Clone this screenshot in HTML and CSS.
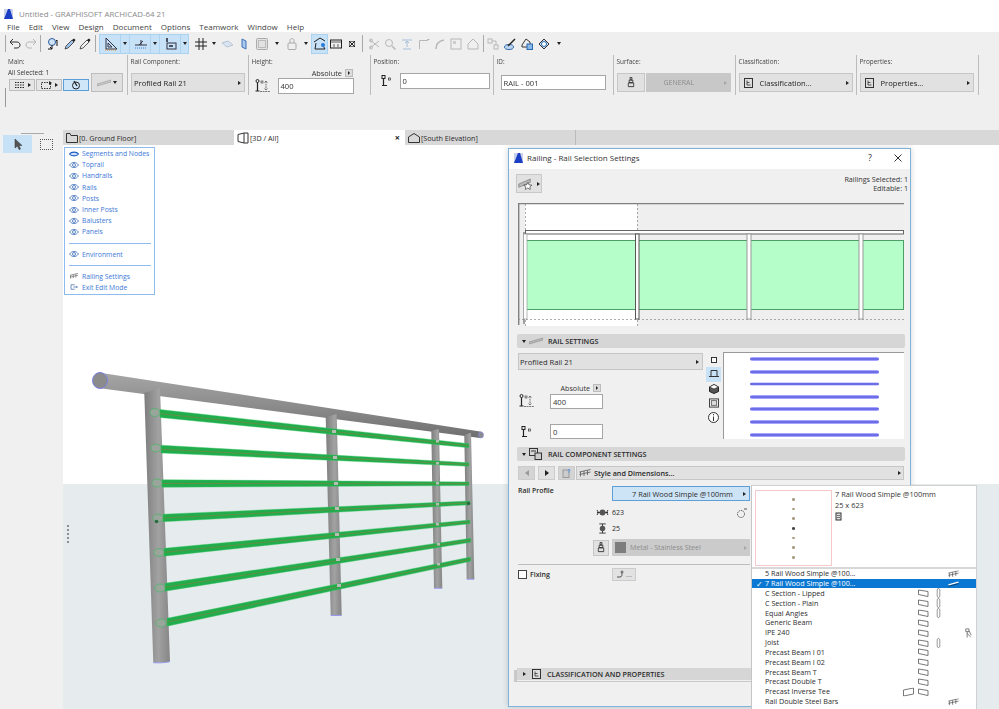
FILE: index.html
```html
<!DOCTYPE html>
<html lang="en">
<head>
<meta charset="utf-8">
<title>Untitled - GRAPHISOFT ARCHICAD-64 21</title>
<link rel="stylesheet" href="styles.css">
</head>
<body>
<svg class="sprite" aria-hidden="true">
  <defs>
    <symbol id="eye" viewBox="0 0 10 6"><path d="M.5 3C2 1 3.500.5 5 .5S8 1 9.500 3C8 5 6.500 5.500 5 5.500S2 5 .5 3Z" fill="none" stroke="#5f88c8"/><circle cx="5" cy="3" r="1.500" fill="none" stroke="#5f88c8"/></symbol>
    <symbol id="beam" viewBox="0 0 11 8"><path d="M.5 1 10 2.500V7.500L.5 5.500Z" fill="#fff" stroke="#555" stroke-width=".8"/></symbol>
    <symbol id="post" viewBox="0 0 5 11"><path d="M1 1.500 2.500.5 4 1.500V9.500L2.500 10.500 1 9.500Z" fill="#fff" stroke="#666" stroke-width=".8"/></symbol>
    <symbol id="rail" viewBox="0 0 12 8"><path d="M.5 3 11.500.5M.5 5.500 11.500 3M1.500 3V7.500M5 2.200V7M8.500 1.500V6" fill="none" stroke="#555" stroke-width=".8"/></symbol>
    <symbol id="railw" viewBox="0 0 12 8"><path d="M.5 5 11.500 2" fill="none" stroke="#fff" stroke-width="1.500"/><path d="M.5 6.500 11.500 3.500" fill="none" stroke="#123" stroke-width=".7"/></symbol>
    <symbol id="person" viewBox="0 0 8 11"><path d="M1 1H4.500V4H1ZM2.500 4V10.500M2.500 6 6.500 10M4.500 3 7 8" fill="none" stroke="#555" stroke-width=".8"/></symbol>
    <symbol id="wall" viewBox="0 0 11 9"><path d="M.5 2.500 10.500.5V6.500L.5 8.500Z" fill="#fff" stroke="#555" stroke-width=".8"/></symbol>
    <symbol id="doc" viewBox="0 0 9 10"><rect x=".5" y=".5" width="8" height="9" fill="#ddd" stroke="#333"/><path d="M3 2.500V7H6.500M3 4.500H5.500" fill="none" stroke="#333" stroke-width=".8"/></symbol>
    <symbol id="brush" viewBox="0 0 8 12"><path d="M3 .5H5V3H3ZM2 3.500H6V6H2ZM1 6.500H7V10.500H1Z" fill="none" stroke="#333"/></symbol>
    <symbol id="height" viewBox="0 0 16 15"><circle cx="2.500" cy="2" r="1.500" fill="none" stroke="#222"/><path d="M2.500 3.500V12M.5 12H4.500" stroke="#222" fill="none" stroke-width="1.200"/><rect x="6" y="2" width="2" height="2" fill="none" stroke="#333" stroke-width=".6"/><path d="M11 2V11M9.500 3.500 11 2 12.500 3.500M9.500 9.500 11 11 12.500 9.500M5 12.500H15" fill="none" stroke="#444" stroke-width=".7" stroke-dasharray="2 .6"/></symbol>
    <symbol id="pos" viewBox="0 0 12 12"><rect x="1" y=".5" width="3" height="3" fill="none" stroke="#222"/><path d="M2.500 3.500V10.500M1 10.500H6" stroke="#222" fill="none" stroke-width="1.200"/><rect x="7.500" y="3" width="2" height="2" fill="none" stroke="#333" stroke-width=".7"/></symbol>
    <symbol id="segs" viewBox="0 0 12 8"><path d="M1 4H11M1 1.500H11M1 6.500H11" stroke="#222" stroke-dasharray="1.500 1" fill="none"/></symbol>
    <symbol id="sel" viewBox="0 0 12 8"><rect x=".5" y="1.500" width="9" height="6" fill="none" stroke="#333" stroke-dasharray="1.500 1"/><path d="M8 0 11 2 8 4Z" fill="#222"/></symbol>
    <symbol id="star" viewBox="0 0 22 14"><path d="M1 7 15 1V5L1 11Z" fill="#bbb" stroke="#555" stroke-width=".6"/><path d="M12 5 13.500 8 17 8.400 14.500 10.500 15 14 12 12 9 14 9.500 10.500 7 8.400 10.500 8Z" fill="#fff" stroke="#333" stroke-width=".8"/></symbol>
  </defs>
</svg>
<div class="app">
  <header class="titlebar">
    <svg class="appicon" viewBox="0 0 9 10"><rect width="9" height="10" fill="#c9d0ea"/><path d="M0 10 4 0H6L9 10Z" fill="#1b3fc4"/></svg>
    <span>Untitled - GRAPHISOFT ARCHICAD-64 21</span>
  </header>
  <nav class="menu">
    <span>File</span><span>Edit</span><span>View</span><span>Design</span><span>Document</span><span>Options</span><span>Teamwork</span><span>Window</span><span>Help</span>
  </nav>
  <div class="toolbar">
    <i class="sep m5"></i>
    <svg class="t12 m3" viewBox="0 0 12 12"><path d="M1 4 4 1M1 4 4 7M1 4H8C12 4 12 10 8 10H5" fill="none" stroke="#333"/></svg>
    <svg class="t12 m4" viewBox="0 0 12 12"><path d="M11 4 8 1M11 4 8 7M11 4H4C0 4 0 10 4 10H7" fill="none" stroke="#b5b5b5"/></svg>
    <i class="sep m3"></i>
    <svg class="t12 m6" viewBox="0 0 12 12"><circle cx="5" cy="4" r="3.500" fill="#cfe3f7" stroke="#2a5a9a"/><path d="M5 7V11H1M5 11 3 9M10 2V8M9 3 10 2" stroke="#111" fill="none"/></svg>
    <svg class="t12 m5" viewBox="0 0 12 12"><path d="M1 11 2 8 8 2 10 4 4 10Z" fill="#9dc3ea" stroke="#333" stroke-width=".8"/><path d="M8 2 10 .5 11.500 2 10 4Z" fill="#222"/></svg>
    <svg class="t12 m3" viewBox="0 0 12 12"><path d="M1 11 2 8 8 2 10 4 4 10Z" fill="#f4f4f4" stroke="#333" stroke-width=".8"/><path d="M8 2 10 .5 11.500 2 10 4Z" fill="#222"/></svg>
    <i class="sep m4"></i>
    <div class="bluegroup m3">
      <span class="bseg"><svg class="t14" viewBox="0 0 14 14"><path d="M2 1V12H13ZM4 6V10H8Z" fill="none" stroke="#334"/><path d="M1 13H13" stroke="#e08a20" stroke-dasharray="1 1"/></svg><b class="tri"></b></span>
      <span class="bseg"><svg class="t14" viewBox="0 0 14 14"><path d="M1 8H13M7 3V8M9 4 5 8" stroke="#334" fill="none"/><path d="M1 11H13" stroke="#3a7ad8" stroke-dasharray="1 1"/></svg><b class="tri"></b></span>
      <span class="bseg"><svg class="t14" viewBox="0 0 14 14"><rect x="3" y="6" width="9" height="6" fill="none" stroke="#334"/><path d="M3 1V5M5 9H9" stroke="#223" stroke-width="1.500"/></svg><b class="tri"></b></span>
    </div>
    <svg class="t12 m6" viewBox="0 0 12 12"><path d="M4 0V12M8 0V12M0 4H12M0 8H12" stroke="#222"/></svg>
    <b class="tri m5"></b>
    <svg class="t13 m5" viewBox="0 0 13 10"><path d="M1 4 7 2 12 6 6 8Z" fill="#d9e4f2" stroke="#b7c4d6"/></svg>
    <svg class="t6 m7" viewBox="0 0 6 12"><path d="M1 1 5 3V11L1 9Z" fill="#a9c9ee" stroke="#3f73b5"/></svg>
    <svg class="t12 m9" viewBox="0 0 12 12"><rect x=".5" y=".5" width="11" height="11" rx="1" fill="#e2e2e2" stroke="#aaa"/><rect x="2.500" y="2.500" width="7" height="7" fill="none" stroke="#bbb"/></svg>
    <b class="tri m7"></b>
    <svg class="t10 m8" viewBox="0 0 10 13"><rect x="1" y="6" width="8" height="6.500" rx="1" fill="none" stroke="#aaa"/><path d="M3 6V3.500C3 1 7 1 7 3.500V6" fill="none" stroke="#aaa"/></svg>
    <b class="tri m7"></b>
    <span class="activebox m3"><svg class="t14" viewBox="0 0 14 14"><path d="M1 5 7 1 12 4M3 6 2 12H12L9 7" fill="none" stroke="#222"/><circle cx="10" cy="8" r="2" fill="#2a7ad8"/></svg></span>
    <svg class="t12 m2" viewBox="0 0 12 10"><rect x=".5" y="1" width="11" height="8" fill="none" stroke="#222"/><path d="M1 3H11M4 5V8M8 5V8" stroke="#222" stroke-width=".7"/></svg>
    <svg class="t8 m6" viewBox="0 0 8 8"><path d="M1 1 7 7M7 1 1 7" stroke="#222"/><rect x="1.500" y="1.500" width="5" height="5" fill="none" stroke="#222" stroke-width=".6"/></svg>
    <i class="sep m6"></i>
    <svg class="t12 m6" viewBox="0 0 12 12"><path d="M1 2 10 9M1 10 10 3" stroke="#b8b8b8" fill="none"/><circle cx="2" cy="2.500" r="1.500" fill="none" stroke="#b8b8b8"/><circle cx="2" cy="9.500" r="1.500" fill="none" stroke="#b8b8b8"/></svg>
    <svg class="t12 m3" viewBox="0 0 12 12"><circle cx="5" cy="5" r="3.500" fill="none" stroke="#b8b8b8"/><path d="M8 8 11.500 11.500" stroke="#b8b8b8" stroke-width="1.500"/></svg>
    <svg class="t12 m5" viewBox="0 0 12 12"><path d="M1 2H11M6 9V3M4 5 6 3 8 5M2 11H10" stroke="#a6bfdc" fill="none"/></svg>
    <svg class="t12 m5" viewBox="0 0 12 12"><path d="M1.500 11V2.500H10M9 1.500H11.500" stroke="#b8b8b8" fill="none"/></svg>
    <svg class="t12 m4" viewBox="0 0 12 12"><path d="M2 11C2 6 5 3 10 2" stroke="#b8b8b8" stroke-width="1.500" fill="none"/></svg>
    <svg class="t12 m4" viewBox="0 0 12 12"><rect x="1" y="1" width="10" height="10" fill="none" stroke="#b8b8b8"/><rect x="3" y="3" width="3" height="3" fill="#ccc"/></svg>
    <svg class="t12 m5" viewBox="0 0 12 12"><path d="M1 6 6 1 11 6V11H1Z" fill="none" stroke="#b8b8b8"/></svg>
    <i class="sep m4"></i>
    <svg class="t12 m3" viewBox="0 0 12 12"><rect x="1" y="1" width="4" height="4" fill="none" stroke="#b8b8b8"/><rect x="7" y="7" width="4" height="4" fill="none" stroke="#b8b8b8"/><path d="M5 3H9V7" fill="none" stroke="#b8b8b8"/></svg>
    <svg class="t13 m5" viewBox="0 0 13 12"><ellipse cx="5" cy="9" rx="4.500" ry="2.500" fill="#bcd6f2" stroke="#3a6ea8"/><path d="M4 8 11 1" stroke="#222" stroke-width="1.500"/></svg>
    <svg class="t12 m4" viewBox="0 0 12 12"><path d="M1 7 5 1 9 4V6M1 7V9H6" fill="none" stroke="#333"/><rect x="6" y="6" width="5.500" height="5.500" fill="#8bb9ea" stroke="#2a6ab0"/></svg>
    <svg class="t12 m5" viewBox="0 0 12 12"><path d="M1 6 6 1 11 6 6 11Z" fill="#cfe0f5" stroke="#333"/><circle cx="6" cy="6" r="2.500" fill="#fff" stroke="#2a6ab0"/></svg>
    <b class="tri m7"></b>
  </div>
  <div class="infobox">
    <section class="igroup w-main">
      <label class="ilabel">Main:</label>
      <div class="allsel">All Selected: 1</div>
      <div class="mainbtns">
        <span class="mbtn"><svg class="t12" viewBox="0 0 12 8"><use href="#segs"/></svg><b class="arr"></b></span>
        <span class="mbtn"><svg class="t12" viewBox="0 0 12 8"><use href="#sel"/></svg><b class="arr"></b></span>
        <span class="mbtn on"><svg class="t10" viewBox="0 0 10 10"><circle cx="5" cy="5.500" r="3.500" fill="none" stroke="#222"/><path d="M3 1 6 6" stroke="#222" stroke-width="1.300"/></svg></span>
        <span class="mbtn big"><svg class="t14" viewBox="0 0 14 8"><path d="M0 5 14 1V3L0 7Z" fill="#ccc" stroke="#999" stroke-width=".6"/></svg><b class="tri"></b></span>
      </div>
      <i class="mainline"></i>
    </section>
    <section class="igroup w-121">
      <label class="ilabel">Rail Component:</label>
      <div class="ibtn rail"><span>Profiled Rail 21</span><b class="arr"></b></div>
    </section>
    <section class="igroup w-122">
      <label class="ilabel">Height:</label>
      <div class="absrow top"><span>Absolute</span><b class="abtn"><b class="arr"></b></b></div>
      <div class="hrow"><svg class="i16" viewBox="0 0 16 15"><use href="#height"/></svg><span class="input h16">400</span></div>
    </section>
    <section class="igroup w-123">
      <label class="ilabel">Position:</label>
      <div class="prow"><svg class="i12" viewBox="0 0 12 12"><use href="#pos"/></svg><span class="input h16">0</span></div>
    </section>
    <section class="igroup w-120">
      <label class="ilabel">ID:</label>
      <div class="idrow"><span class="input h16">RAIL - 001</span></div>
    </section>
    <section class="igroup w-122">
      <label class="ilabel">Surface:</label>
      <div class="surf">
        <span class="ibtn sq"><svg class="i8" viewBox="0 0 8 12"><use href="#brush"/></svg></span>
        <span class="ibtn general"><span>GENERAL</span><b class="arr lt"></b></span>
      </div>
    </section>
    <section class="igroup w-121">
      <label class="ilabel">Classification:</label>
      <div class="ibtn cp"><svg class="i9" viewBox="0 0 9 10"><use href="#doc"/></svg><span>Classification...</span><b class="arr"></b></div>
    </section>
    <section class="igroup w-122">
      <label class="ilabel">Properties:</label>
      <div class="ibtn cp"><svg class="i9" viewBox="0 0 9 10"><use href="#doc"/></svg><span>Properties...</span><b class="arr"></b></div>
    </section>
  </div>
  <div class="work">
    <aside class="side">
      <i class="sideline"></i>
      <div class="sidetools">
        <span class="tool on"><svg class="t8" viewBox="0 0 8 12"><path d="M1 1V10L3.500 8 5 11.500 6.500 11 5 7.500H8Z" fill="#555" stroke="#333" stroke-width=".5"/></svg></span>
        <span class="marquee"></span>
      </div>
    </aside>
    <main class="mainarea">
      <div class="tabs">
        <div class="tab"><svg class="i12" viewBox="0 0 12 10"><path d="M.5 9.500V.5H4L5 2.500H11.500V9.500Z" fill="none" stroke="#333"/></svg><span>[0. Ground Floor]</span></div>
        <div class="tab active"><svg class="i12" viewBox="0 0 12 11"><path d="M1 2 7 .5V10.500L1 9ZM7 .5H11V10.500H7" fill="none" stroke="#333"/></svg><span>[3D / All]</span><b class="close">×</b></div>
        <div class="tab last"><svg class="i12" viewBox="0 0 12 10"><path d="M.5 9.500V4L6 .5 11.500 4V9.500Z" fill="none" stroke="#333"/></svg><span>[South Elevation]</span></div>
      </div>
      <div class="canvas">
        <svg class="scene" viewBox="63 145 936 564">
          <defs>
            <linearGradient id="pg" x1="0" x2="1" y1="0" y2="0"><stop offset="0" stop-color="#7d7d7d"/><stop offset=".55" stop-color="#a2a2a2"/><stop offset="1" stop-color="#858585"/></linearGradient>
            <linearGradient id="rg" x1="0" x2="0" y1="0" y2="1"><stop offset="0" stop-color="#a6a6a6"/><stop offset=".5" stop-color="#8c8c8c"/><stop offset="1" stop-color="#6f6f6f"/></linearGradient>
          </defs>
          <path d="M100 372.700 481.700 431.700 480 438 100 388.300Z" fill="url(#rg)"/>
          <ellipse cx="481" cy="435" rx="2.500" ry="3" fill="#8a8a8a" stroke="#8888ee" stroke-width=".6"/>
          <ellipse cx="100" cy="380.500" rx="7.500" ry="8" fill="#8b8b8b" stroke="#7f7fea"/>
          <path d="M144.300 393 160 388 170 661.700C164 663 158 663 153.300 662.700Z" fill="url(#pg)"/>
          <path d="M325.700 417 336.700 414 341.700 615H330.700Z" fill="url(#pg)"/>
          <path d="M431.300 430.700 439 429 442.300 588H434Z" fill="url(#pg)"/>
          <path d="M464.300 435 471 432.700 474.300 579H466.700Z" fill="url(#pg)"/>
          <path d="M153.300 662.700C158 663 164 663 170 661.700M330.700 615.500H341.700M434 588.300H442.300M466.700 579.300H474.300" stroke="#9a9af0" fill="none"/>
          <g class="railends">
            <ellipse cx="155" cy="412.500" rx="5" ry="4"/><ellipse cx="156" cy="448" rx="5" ry="4"/><ellipse cx="157" cy="483" rx="5" ry="4"/><ellipse cx="158" cy="518" rx="5" ry="4"/><ellipse cx="159" cy="552.500" rx="5" ry="4"/><ellipse cx="160" cy="588" rx="5" ry="4"/><ellipse cx="161" cy="623" rx="5" ry="4"/>
          </g>
          <g class="rails">
            <path d="M160 409.500 469 443.700V447.800L160 417.500Z"/>
            <path d="M161 445.200 469 462.700V466.300L161 453Z"/>
            <path d="M162 479.700 469 481.900V485.500L162 487.300Z"/>
            <path d="M163 514.200 470 501V504.800L163 521.800Z"/>
            <path d="M164 548.300 470 519.900V523.800L164 556.200Z"/>
            <path d="M165 583.300 470.700 538.200V542.300L165 591.200Z"/>
            <path d="M167 618.300 470.700 557V561.300L167 626.200Z"/>
          </g>
          <g class="railcores">
            <path d="M160 413.700 469 445.700M161 449.300 469 464.500M162 483.500 469 483.700M163 518 470 502.900M164 552.300 470 521.800M165 587.300 470.700 540.200M167 622.200 470.700 559.200"/>
          </g>
          <g class="joints">
            <rect x="332" y="430" width="4" height="3"/><rect x="333" y="456" width="4" height="3"/><rect x="334" y="482" width="4" height="3"/><rect x="335" y="507" width="4" height="3"/><rect x="335" y="533" width="4" height="3"/><rect x="336" y="558" width="4" height="3"/><rect x="337" y="584" width="4" height="3"/><rect x="436" y="440" width="3" height="2.500"/><rect x="436" y="462" width="3" height="2.500"/><rect x="436" y="482" width="3" height="2.500"/><rect x="436" y="503" width="3" height="2.500"/><rect x="436" y="523" width="3" height="2.500"/><rect x="437" y="543" width="3" height="2.500"/><rect x="437" y="563" width="3" height="2.500"/>
          </g>
          <circle cx="156.500" cy="521.500" r="1.800" fill="#2d6a43"/>
          <circle cx="468.500" cy="503.500" r="1.800" fill="#2d6a43"/>
        </svg>
        <i class="grip"></i>
        <div class="palette">
          <div class="prow-e first"><svg class="eye" viewBox="0 0 10 6"><path d="M.5 3C2 .5 8 .5 9.500 3 8 5.500 2 5.500 .5 3Z" fill="#cfe0f7" stroke="#1f5fc8" stroke-width="1.100"/></svg><span>Segments and Nodes</span></div>
          <div class="prow-e"><svg class="eye" viewBox="0 0 10 6"><use href="#eye"/></svg><span>Toprail</span></div>
          <div class="prow-e"><svg class="eye" viewBox="0 0 10 6"><use href="#eye"/></svg><span>Handrails</span></div>
          <div class="prow-e"><svg class="eye" viewBox="0 0 10 6"><use href="#eye"/></svg><span>Rails</span></div>
          <div class="prow-e"><svg class="eye" viewBox="0 0 10 6"><use href="#eye"/></svg><span>Posts</span></div>
          <div class="prow-e"><svg class="eye" viewBox="0 0 10 6"><use href="#eye"/></svg><span>Inner Posts</span></div>
          <div class="prow-e"><svg class="eye" viewBox="0 0 10 6"><use href="#eye"/></svg><span>Balusters</span></div>
          <div class="prow-e"><svg class="eye" viewBox="0 0 10 6"><use href="#eye"/></svg><span>Panels</span></div>
          <hr class="pline">
          <div class="prow-e"><svg class="eye" viewBox="0 0 10 6"><use href="#eye"/></svg><span>Environment</span></div>
          <hr class="pline">
          <div class="prow-e"><svg class="eye" viewBox="0 0 12 8"><use href="#rail"/></svg><span>Railing Settings</span></div>
          <div class="prow-e"><svg class="eye" viewBox="0 0 10 8"><path d="M6 1H1V7H6M4 4H9.500M8 2.500 9.500 4 8 5.500" fill="none" stroke="#4a6fa8"/></svg><span>Exit Edit Mode</span></div>
        </div>

        <div class="dialog">
          <div class="dtitle">
            <svg class="appicon d" viewBox="0 0 9 10"><rect width="9" height="10" fill="#c9d0ea"/><path d="M0 10 4 0H6L9 10Z" fill="#1b3fc4"/></svg>
            <span class="dname">Railing - Rail Selection Settings</span>
            <span class="dhelp">?</span>
            <svg class="dclose" viewBox="0 0 8 8"><path d="M.5 .5 7.500 7.500M7.500 .5 .5 7.500" stroke="#333"/></svg>
          </div>
          <div class="dtop">
            <span class="fav"><svg class="favi" viewBox="0 0 22 14"><use href="#star"/></svg><b class="arr"></b></span>
            <div class="dstat"><div>Railings Selected: 1</div><div>Editable: 1</div></div>
          </div>
          <svg class="dpreview" viewBox="518 203 386 123">
            <rect x="518" y="203" width="386" height="123" fill="#efefef"/>
            <rect x="525" y="204" width="112" height="122" fill="#fff"/>
            <path d="M518 203.500H904M518.700 203V325M524 232V324" stroke="#808080" fill="none" stroke-width="1.400"/>
            <path d="M525.500 204V326M637.500 204V326M518 319.500H904" stroke="#888" stroke-width=".7" stroke-dasharray="2 2" fill="none"/>
            <rect x="525.500" y="240.500" width="378" height="69" fill="#b5fdc9" stroke="#4d9e68"/>
            <rect x="525.500" y="230.500" width="378" height="3.500" fill="#fff" stroke="#555" stroke-width=".9"/>
            <rect x="523.500" y="234" width="3.500" height="85" fill="#fff" stroke="#999" stroke-width=".7"/>
            <rect x="635.500" y="234" width="3.500" height="85" fill="#fff" stroke="#555"/>
            <rect x="747" y="234" width="4" height="85" fill="#fff" stroke="#999"/>
            <rect x="859" y="234" width="4" height="85" fill="#fff" stroke="#999"/>
          </svg>
          <div class="dbar first"><b class="down"></b><svg class="baricon" viewBox="0 0 14 8"><path d="M0 5 14 1V3L0 7Z" fill="#bbb" stroke="#888" stroke-width=".6"/></svg><span>RAIL SETTINGS</span></div>
          <div class="rs">
            <div class="rsleft">
              <div class="ibtn profiled"><span>Profiled Rail 21</span><b class="arr"></b></div>
              <div class="absrow d"><span>Absolute</span><b class="abtn"><b class="arr"></b></b></div>
              <div class="rsfield"><svg class="i16" viewBox="0 0 16 15"><use href="#height"/></svg><span class="input h15">400</span></div>
              <div class="rsfield two"><svg class="i12 shift" viewBox="0 0 12 12"><use href="#pos"/></svg><span class="input h15">0</span></div>
            </div>
            <div class="rsicons">
              <span class="rsi"><svg class="i6" viewBox="0 0 6 6"><rect x=".5" y=".5" width="5" height="5" fill="#fff" stroke="#333"/></svg></span>
              <span class="rsi on"><svg class="i10" viewBox="0 0 10 9"><path d="M2 7V1H8V7M0 7H10" fill="none" stroke="#333"/></svg></span>
              <span class="rsi"><svg class="i10" viewBox="0 0 10 10"><path d="M5 .5 9.500 3V7.500L5 9.500 .5 7.500V3Z" fill="#555" stroke="#222"/><path d="M.5 3 5 5 9.500 3 5 .5Z" fill="#fff" stroke="#222" stroke-width=".6"/></svg></span>
              <span class="rsi"><svg class="i10" viewBox="0 0 11 10"><rect x=".5" y=".5" width="10" height="9" fill="none" stroke="#333"/><rect x="2.500" y="2.500" width="6" height="5" fill="#ddd" stroke="#333" stroke-width=".7"/></svg></span>
              <span class="rsi"><svg class="i11" viewBox="0 0 11 11"><circle cx="5.500" cy="5.500" r="5" fill="#fff" stroke="#333"/><path d="M5.500 4.500V9M5.500 2V3.300" stroke="#333"/></svg></span>
            </div>
            <div class="rspreview">
              <i class="rb"></i><i class="rb"></i><i class="rb thin"></i><i class="rb"></i><i class="rb"></i><i class="rb"></i><i class="rb"></i>
            </div>
          </div>
          <div class="dbar"><b class="down"></b><svg class="baricon sm" viewBox="0 0 13 12"><rect x=".5" y=".5" width="8" height="7" fill="none" stroke="#333"/><rect x="6" y="5" width="6.500" height="6.500" fill="#ccc" stroke="#333"/><path d="M2 3H7" stroke="#333"/></svg><span>RAIL COMPONENT SETTINGS</span></div>
          <div class="navrow">
            <span class="nb dis"><b class="larr"></b></span>
            <span class="nb"><b class="rarr"></b></span>
            <span class="nb dis"><svg class="i10" viewBox="0 0 10 10"><rect x="1" y="2" width="6" height="7.500" fill="#ccc" stroke="#999"/><path d="M7 5V1M5.500 2.500 7 1 8.500 2.500" stroke="#6aa0dc" fill="none"/></svg></span>
            <div class="ibtn sd"><svg class="i12" viewBox="0 0 12 8"><use href="#rail"/></svg><span>Style and Dimensions...</span><b class="arr"></b></div>
          </div>
          <div class="profile">
            <div class="pfrow one"><span class="pflabel">Rail Profile</span><div class="pfbtn"><span>7 Rail Wood Simple @100mm</span><b class="arr"></b></div></div>
            <div class="pfrow two"><svg class="dimi" viewBox="0 0 13 10"><path d="M1 5H12M1 2.500 2.500 5 1 7.500M12 2.500 10.500 5 12 7.500" fill="none" stroke="#333"/><circle cx="6.500" cy="5" r="3" fill="#555"/></svg><span>623</span><svg class="angle" viewBox="0 0 12 10"><circle cx="5" cy="6" r="3.500" fill="none" stroke="#555" stroke-dasharray="1.500 .8"/><path d="M8 1H11" stroke="#555"/></svg></div>
            <div class="pfrow three"><svg class="dimi" viewBox="0 0 13 12"><path d="M6.500 1V11M3 1H10M3 11H10" fill="none" stroke="#333"/><circle cx="6.500" cy="6" r="3" fill="#555"/></svg><span>25</span></div>
            <div class="pfrow four"><span class="ibtn pfb"><svg class="i8" viewBox="0 0 8 12"><use href="#brush"/></svg></span><div class="metal"><i class="swatch"></i><span>Metal - Stainless Steel</span><b class="arr lt"></b></div></div>
            <div class="pfsep"></div>
            <div class="pfrow five"><label class="fixing"><i class="check"></i><span>Fixing</span></label><span class="fixbtn"><svg class="i8" viewBox="0 0 8 9"><path d="M1 7H4C6 7 6 5 6 3" fill="none" stroke="#555"/><circle cx="6" cy="2" r="1" fill="none" stroke="#555"/></svg>...</span></div>
          </div>
          <div class="dbar cls"><b class="rtri"></b><svg class="baricon cl" viewBox="0 0 9 10"><use href="#doc"/></svg><span>CLASSIFICATION AND PROPERTIES</span></div>
        </div>

        <div class="popup">
          <div class="pophead">
            <div class="popprev"><i class="pd"></i><i class="pd"></i><i class="pd"></i><i class="pd dark"></i><i class="pd"></i><i class="pd"></i><i class="pd"></i></div>
            <div class="popinfo"><div>7 Rail Wood Simple @100mm</div><div>25 x 623</div><svg class="i8 popi" viewBox="0 0 8 8"><rect x="1" y=".5" width="5" height="7" fill="#ddd" stroke="#333"/><path d="M2 3H5M2 5H5" stroke="#333" stroke-width=".6"/></svg></div>
          </div>
          <div class="poplist">
            <div class="pr"><span></span><span>5 Rail Wood Simple @100...</span><i></i><i></i><i></i><svg class="ci" viewBox="0 0 12 8"><use href="#rail"/></svg><i></i></div>
            <div class="pr sel"><span class="tick">✓</span><span>7 Rail Wood Simple @100...</span><i></i><i></i><i></i><svg class="ci" viewBox="0 0 12 8"><use href="#railw"/></svg><i></i></div>
            <div class="pr"><span></span><span>C Section - Lipped</span><i></i><svg class="ci" viewBox="0 0 11 8"><use href="#beam"/></svg><svg class="ci" viewBox="0 0 5 11"><use href="#post"/></svg><i></i><i></i></div>
            <div class="pr"><span></span><span>C Section - Plain</span><i></i><svg class="ci" viewBox="0 0 11 8"><use href="#beam"/></svg><svg class="ci" viewBox="0 0 5 11"><use href="#post"/></svg><i></i><i></i></div>
            <div class="pr"><span></span><span>Equal Angles</span><i></i><svg class="ci" viewBox="0 0 11 8"><use href="#beam"/></svg><svg class="ci" viewBox="0 0 5 11"><use href="#post"/></svg><i></i><i></i></div>
            <div class="pr"><span></span><span>Generic Beam</span><i></i><svg class="ci" viewBox="0 0 11 8"><use href="#beam"/></svg><i></i><i></i><i></i></div>
            <div class="pr"><span></span><span>IPE 240</span><i></i><svg class="ci" viewBox="0 0 11 8"><use href="#beam"/></svg><i></i><i></i><svg class="ci" viewBox="0 0 8 11"><use href="#person"/></svg></div>
            <div class="pr"><span></span><span>Joist</span><i></i><svg class="ci" viewBox="0 0 11 8"><use href="#beam"/></svg><svg class="ci" viewBox="0 0 5 11"><use href="#post"/></svg><i></i><i></i></div>
            <div class="pr"><span></span><span>Precast Beam I 01</span><i></i><svg class="ci" viewBox="0 0 11 8"><use href="#beam"/></svg><i></i><i></i><i></i></div>
            <div class="pr"><span></span><span>Precast Beam I 02</span><i></i><svg class="ci" viewBox="0 0 11 8"><use href="#beam"/></svg><i></i><i></i><i></i></div>
            <div class="pr"><span></span><span>Precast Beam T</span><i></i><svg class="ci" viewBox="0 0 11 8"><use href="#beam"/></svg><i></i><i></i><i></i></div>
            <div class="pr"><span></span><span>Precast Double T</span><i></i><svg class="ci" viewBox="0 0 11 8"><use href="#beam"/></svg><i></i><i></i><i></i></div>
            <div class="pr"><span></span><span>Precast Inverse Tee</span><svg class="ci" viewBox="0 0 11 9"><use href="#wall"/></svg><svg class="ci" viewBox="0 0 11 8"><use href="#beam"/></svg><i></i><i></i><i></i></div>
            <div class="pr"><span></span><span>Rail Double Steel Bars</span><i></i><i></i><i></i><svg class="ci" viewBox="0 0 12 8"><use href="#rail"/></svg><i></i></div>
          </div>
        </div>
      </div>
    </main>
  </div>
</div>
</body>
</html>
```
FILE: styles.css
```css
* { box-sizing: border-box; }
html, body { margin: 0; padding: 0; background: #fff; }
body { font-family: "Open Sans", "Noto Sans", sans-serif; font-size: 7.4px; color: #2a2a2a; }
i, b { font-style: normal; display: block; }
svg { display: block; flex: none; }
.sprite { position: absolute; width: 0; height: 0; }
.app { width: 999px; height: 709px; overflow: hidden; display: flex; flex-direction: column; filter: blur(.3px); }

.titlebar { height: 21px; padding: 7px 0 0 4px; display: flex; align-items: center; gap: 6px; color: #8a8a8a; font-size: 7.9px; background: #fff; }
.appicon { width: 9px; height: 10px; }
.menu { height: 11px; display: flex; align-items: center; gap: 9px; padding-left: 7px; font-size: 8px; color: #444; background: #fff; }

.toolbar { height: 23px; background: #efefef; display: flex; align-items: center; }
.sep { width: 1px; height: 17px; background: #a8a8a8; flex: none; }
.tri { width: 0; height: 0; border: 2.5px solid transparent; border-top: 3px solid #222; border-bottom: 0; flex: none; }
.t6 { width: 6px; height: 12px; } .t8 { width: 8px; height: 10px; } .t10 { width: 10px; height: 13px; }
.t12 { width: 12px; height: 12px; } .t13 { width: 13px; height: 12px; } .t14 { width: 14px; height: 14px; }
.m2 { margin-left: 2px; } .m3 { margin-left: 3px; } .m4 { margin-left: 4px; } .m5 { margin-left: 5px; }
.m6 { margin-left: 6px; } .m7 { margin-left: 7px; } .m8 { margin-left: 8px; } .m9 { margin-left: 9px; }
.bluegroup { display: flex; height: 20px; width: 90px; background: #c7e1f6; border: 1px solid #a9d2f0; flex: none; }
.bseg { width: 30px; display: flex; align-items: center; padding-left: 4px; gap: 5px; background: linear-gradient(to right, transparent 20px, #aed3ef 20px, #aed3ef 21px, transparent 21px); }
.bseg + .bseg { border-left: 1px solid #aed3ef; }
.activebox { width: 17px; height: 20px; background: #c7e1f6; border: 1px solid #a9d2f0; display: flex; align-items: center; justify-content: center; flex: none; }

.infobox { height: 75px; background: #efefef; display: flex; align-items: flex-start; }
.igroup { height: 40px; border-right: 1px solid #bcbcbc; padding: 3px 0 0 2.5px; flex: none; position: relative; }
.w-main { width: 128px; padding-left: 8px; }
.w-121 { width: 121px; } .w-122 { width: 122px; } .w-123 { width: 123px; } .w-120 { width: 120px; }
.ilabel { display: block; font-size: 6.4px; line-height: 8px; color: #444; }
.allsel { font-size: 6.4px; line-height: 8px; margin-top: 3px; color: #333; }
.mainbtns { display: flex; gap: 1px; margin-left: 1px; margin-top: -1px; height: 15px; align-items: flex-end; }
.mbtn { width: 26px; height: 12px; background: #e6e6e6; border: 1px solid #bdbdbd; display: flex; align-items: center; justify-content: center; gap: 2px; }
.mbtn svg { height: 8px; }
.mbtn.on { background: #cfe5f8; border-color: #5c9fd8; }
.mbtn.on svg { height: 10px; }
.mbtn.big { width: 32px; height: 19px; margin-left: 1px; background: #e0e0e0; margin-bottom: -1px; }
.mainline { position: absolute; left: 5px; top: 33px; width: 1px; height: 19px; background: #999; }
.arr { width: 0; height: 0; border: 2.5px solid transparent; border-left: 3px solid #222; border-right: 0; flex: none; }
.arr.lt { border-left-color: #a8a8a8; }
.ibtn { background: #e1e1e1; border: 1px solid #c6c6c6; display: flex; align-items: center; }
.rail { margin: 7px 0 0 .5px; width: 114px; height: 19px; justify-content: space-between; padding: 0 3px 0 2px; font-size: 7.6px; color: #222; }
.absrow { display: flex; justify-content: flex-end; align-items: center; gap: 3px; font-size: 7.4px; margin-right: 17px; height: 9px; color: #333; }
.absrow.top { margin-top: 2px; }
.abtn { width: 8px; height: 8px; background: #ddd; border: 1px solid #bbb; display: flex; align-items: center; justify-content: center; }
.abtn .arr { border-width: 2px; border-left-width: 2.5px; border-right: 0; }
.hrow { display: flex; align-items: center; gap: 7px; margin: 1px 0 0 3px; }
.i16 { width: 16px; height: 15px; } .i12 { width: 12px; height: 12px; } .i8 { width: 8px; height: 11px; }
.i9 { width: 9px; height: 10px; } .i10 { width: 10px; height: 10px; } .i11 { width: 11px; height: 11px; } .i6 { width: 6px; height: 6px; }
.input { display: flex; align-items: center; padding-left: 2px; background: #fff; border: 1px solid #a5a5a5; font-size: 7.6px; color: #333; flex: none; }
.h16 { height: 16px; } .h15 { height: 15px; }
.hrow .input { width: 76px; }
.prow { display: flex; align-items: center; gap: 7px; margin: 7px 0 0 7px; }
.prow .input { width: 90px; }
.idrow { margin: 9px 0 0 4px; }
.idrow .input { width: 105px; height: 15px; }
.surf { display: flex; gap: 1px; margin-top: 7px; }
.sq { width: 28px; height: 19px; justify-content: center; }
.general { width: 85px; height: 19px; background: #c8c8c8; border-color: #c8c8c8; justify-content: space-between; padding: 0 3px 0 17px; color: #8c8c8c; font-size: 7px; }
.cp { margin-top: 7px; width: 114px; height: 19px; padding: 0 3px 0 4px; gap: 7px; font-size: 7.6px; color: #222; }
.cp .arr { margin-left: auto; }

.work { flex: 1; display: flex; min-height: 0; }
.side { width: 63px; background: #f0f0f0; position: relative; flex: none; }
.sideline { width: 23px; height: 1px; background: #aaa; margin: 3px 0 0 21px; }
.sidetools { display: flex; margin: 1px 0 0 3px; align-items: center; }
.tool { width: 29px; height: 18px; display: flex; align-items: center; justify-content: center; }
.tool.on { background: #c7e1f6; }
.tool svg { height: 12px; }
.marquee { width: 13px; height: 11px; border: 1px dotted #555; margin-left: 8px; }
.mainarea { flex: 1; display: flex; flex-direction: column; min-width: 0; }
.tabs { height: 15px; display: flex; background: #d8d8d8; flex: none; font-size: 7.2px; }
.tab { width: 171px; display: flex; align-items: center; gap: 1px; padding-left: 3px; position: relative; }
.tab.active { background: #fff; }
.tab.last { border-right: 1px solid #bbb; }
.tab:first-child { margin-left: 1px; width: 170px; padding-left: 2px; }
.close { position: absolute; right: 5px; top: 1px; font-size: 9px; line-height: 13px; color: #222; }
.canvas { flex: 1; position: relative; background: linear-gradient(#fff 339px, #e6ebed 339px); overflow: hidden; }
.scene { position: absolute; left: 0; top: 0; width: 936px; height: 564px; }
.rails path { fill: #22ad4d; stroke: #3cc869; stroke-width: .4; }
.railcores path { fill: none; stroke: #8f7a3c; stroke-width: .6; }
.railends ellipse { fill: #9aa59c; stroke: #44b866; stroke-width: .7; }
.joints rect { fill: #b5bdb5; }
.grip { position: absolute; left: 4px; top: 380px; width: 2px; height: 18px; border-left: 2px dotted #8f8f8f; }

.palette { position: absolute; left: 1px; top: 2px; width: 91px; height: 148px; background: #fff; border: 1px solid #8ebcf0; color: #3c78d8; font-size: 6.8px; }
.prow-e { height: 11.2px; display: flex; align-items: center; gap: 3px; padding-left: 4px; }
.eye { width: 10px; height: 6px; }
.pline { height: 1px; border: 0; margin: 5px 3px 5px 4px; background: #8ebcf0; }

.dialog { position: absolute; left: 445px; top: 3px; width: 403px; height: 559px; background: #f0f0f0; border: 1px solid #7fb3d9; box-shadow: 0 0 6px rgba(0,0,0,.18); }
.dtitle { height: 20px; background: #fff; display: flex; align-items: center; padding: 0 8px 3px 5px; font-size: 8px; color: #333; }
.appicon.d { margin-right: 4px; }
.dname { flex: 1; }
.dhelp { margin-right: 22px; font-size: 9px; }
.dclose { width: 8px; height: 8px; }
.dtop { height: 34px; display: flex; justify-content: space-between; padding: 5px 2px 0 7px; }
.fav { width: 26px; height: 19px; background: #e1e1e1; border: 1px solid #c8c8c8; display: flex; align-items: center; justify-content: center; gap: 1px; }
.favi { width: 18px; height: 12px; }
.dstat { text-align: right; font-size: 7.2px; line-height: 9px; color: #333; padding-top: 1px; }
.dpreview { width: 386px; height: 123px; margin-left: 9px; }
.dbar { height: 14px; margin-left: 8px; width: 388px; background: #d6d6d6; border-radius: 2px; display: flex; align-items: center; padding-left: 5px; font-weight: 600; font-size: 7.2px; color: #2a2a2a; }
.dbar.first { margin-top: 8px; }
.down { width: 0; height: 0; border: 2.5px solid transparent; border-top: 3px solid #222; border-bottom: 0; }
.rtri { width: 0; height: 0; border: 2.5px solid transparent; border-left: 3px solid #222; border-right: 0; margin-left: 1px; }
.baricon { width: 14px; height: 8px; margin: 0 5px 0 3px; }
.baricon.sm { width: 13px; height: 12px; margin: 0 6px 0 3px; }
.baricon.cl { width: 9px; height: 10px; margin: 0 6px 0 6px; }
.rs { height: 99px; display: flex; padding-left: 9px; }
.rsleft { width: 185px; padding-top: 5px; }
.profiled { height: 17px; justify-content: space-between; padding: 0 3px 0 1px; font-size: 7.6px; }
.absrow.d { margin-top: 13px; margin-right: 102px; height: 10px; font-size: 7.2px; }
.rsfield { display: flex; align-items: center; margin-top: 1px; padding-left: 1px; gap: 15px; }
.rsfield .input { width: 53px; }
.rsfield.two { margin-top: 15px; gap: 17px; padding-left: 3px; }
.rsicons { width: 20px; padding: 5px 0 0 3px; display: flex; flex-direction: column; }
.rsi { width: 15px; height: 14.3px; display: flex; align-items: center; justify-content: center; }
.rsi.on { background: #c7e1f6; }
.rspreview { width: 181px; height: 87px; margin-top: 4px; background: #fff; border-top: 1px solid #999; border-left: 1px solid #999; padding: 4px 0 0 26px; display: flex; flex-direction: column; gap: 8.6px; overflow: hidden; }
.rb { width: 129px; height: 4px; background: linear-gradient(#a5a5ff 0 1.4px, #6d6de6 1.4px 2.6px, #a5a5ff 2.6px); border-radius: 2px; flex: none; }
.rb.thin { background: linear-gradient(#d5d5ff 0 1.4px, #6d6de6 1.4px 2.6px, #d5d5ff 2.6px); }
.navrow { display: flex; margin: 5px 0 0 9px; height: 14px; width: 386px; gap: 3px; }
.nb { width: 17px; height: 14px; background: #e1e1e1; border: 1px solid #ccc; display: flex; align-items: center; justify-content: center; flex: none; }
.nb.dis { background: #d4d4d4; }
.larr { width: 0; height: 0; border: 3px solid transparent; border-right: 4px solid #999; border-left: 0; }
.rarr { width: 0; height: 0; border: 3px solid transparent; border-left: 4px solid #222; border-right: 0; }
.sd { flex: 1; margin-left: -2px; padding: 0 2px 0 2px; gap: 3px; font-weight: 600; font-size: 7.2px; }
.sd .arr { margin-left: auto; }
.profile { width: 232px; margin-left: 9px; height: 182px; }
.pfrow { display: grid; grid-template-columns: 94px 138px; align-items: center; }
.pfrow.one { margin-top: 6px; height: 15px; }
.pflabel { font-weight: 600; font-size: 6.9px; align-self: start; }
.pfbtn { height: 15px; background: #cde4f7; border: 1px solid #5d9fd6; display: flex; align-items: center; justify-content: space-between; padding: 0 3px 0 19px; font-size: 7.4px; }
.two, .three { grid-template-columns: 78px 16px 100px 38px; }
.pfrow.two { margin-top: 6px; height: 11px; }
.pfrow.three { margin-top: 5px; height: 11px; }
.pfrow.two .dimi, .pfrow.three .dimi { grid-column: 2; width: 13px; height: 11px; }
.pfrow.two span, .pfrow.three span { font-size: 7px; }
.angle { width: 12px; height: 10px; justify-self: end; grid-column: 4; margin-right: 2px; }
.pfrow.four { margin-top: 5px; height: 17px; grid-template-columns: 75px 19px 138px; }
.pfb { grid-column: 2; width: 16px; height: 16px; justify-content: center; }
.metal { height: 17px; background: #cbcbcb; display: flex; align-items: center; padding: 0 3px; color: #8c8c8c; font-size: 7px; }
.swatch { width: 11px; height: 11px; background: #7d7d7d; margin-right: 4px; }
.metal .arr { margin-left: auto; }
.pfsep { height: 1px; background: #bdbdbd; margin-top: 8px; }
.pfrow.five { margin-top: 2px; height: 14px; }
.fixing { display: flex; align-items: center; gap: 3px; font-weight: 600; font-size: 7px; }
.check { width: 9px; height: 9px; background: #fff; border: 1px solid #444; }
.fixbtn { width: 24px; height: 13px; background: #e2e2e2; border: 1px solid #ccc; display: flex; align-items: center; justify-content: center; gap: 2px; color: #777; }
.fixbtn svg { height: 9px; }
.dbar.cls { height: 12px; border-radius: 0; box-shadow: 0 1px 0 #f0f0f0, -3px 2px 0 #c9c9c9; }

.popup { position: absolute; left: 688px; top: 340px; width: 226px; height: 224px; background: #fff; border-left: 1px solid #c5c5c5; border-top: 1px solid #d0d0d0; border-right: 1px solid #d0d0d0; overflow: hidden; }
.pophead { height: 82.7px; display: flex; border-bottom: 2px solid #d8d8d8; padding: 4px 0 0 3px; }
.popprev { width: 77px; height: 76px; border: 1px solid #f5c9c9; display: flex; flex-direction: column; align-items: center; padding-top: 7px; gap: 7.2px; flex: none; }
.pd { width: 3px; height: 2.5px; border-radius: 50%; background: #a89a80; flex: none; }
.pd.dark { background: #444; }
.popinfo { margin: -1px 0 0 3px; font-size: 7.4px; line-height: 11px; color: #333; }
.poplist { display: flex; flex-direction: column; }
.pr { height: 9.85px; display: grid; grid-template-columns: 13px 1fr repeat(5, 15px); align-items: center; font-size: 7.2px; line-height: 9px; color: #2d2d2d; flex: none; padding-right: .5px; }
.pr.sel { background: #0a78d2; color: #fff; }
.tick { font-size: 8px; text-align: right; padding-right: 2px; }
.ci { width: 11px; height: 10px; justify-self: center; overflow: visible; }
```
